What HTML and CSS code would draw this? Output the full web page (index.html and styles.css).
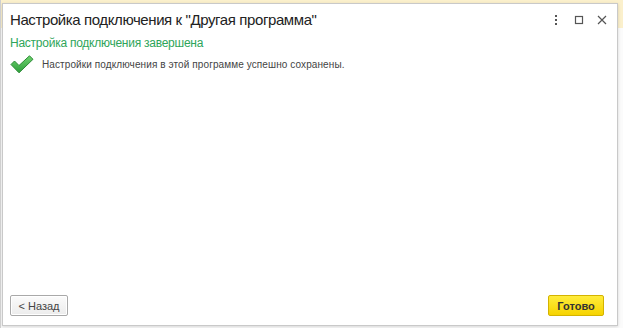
FILE: index.html
```html
<!DOCTYPE html>
<html lang="ru">
<head>
    <meta charset="UTF-8">
    <title>Настройка подключения</title>
    <link rel="stylesheet" href="styles.css">
</head>
<body>
    <div class="desktop">
        <div class="topband"></div>
        <div class="window">
            <div class="titlebar">
                <h1 class="title">Настройка подключения к "Другая программа"</h1>
                <div class="controls">
                    <svg width="12" height="12" viewBox="0 0 12 12">
                        <rect x="5" y="1" width="2" height="2" fill="#555"/>
                        <rect x="5" y="5" width="2" height="2" fill="#555"/>
                        <rect x="5" y="9" width="2" height="2" fill="#555"/>
                    </svg>
                    <svg width="12" height="12" viewBox="0 0 12 12">
                        <rect x="2.5" y="2.5" width="7" height="7" fill="none" stroke="#555" stroke-width="1.2"/>
                    </svg>
                    <svg width="12" height="12" viewBox="0 0 12 12">
                        <path d="M2 2 L10 10 M10 2 L2 10" stroke="#555" stroke-width="1.2"/>
                    </svg>
                </div>
            </div>
            <div class="content">
                <div class="subtitle">Настройка подключения завершена</div>
                <div class="message">
                    <svg class="check" width="24" height="19" viewBox="0 0 24 19">
                        <defs>
                            <linearGradient id="g" x1="0" y1="0" x2="0" y2="1">
                                <stop offset="0" stop-color="#6ed36e"/>
                                <stop offset="1" stop-color="#2e9e3c"/>
                            </linearGradient>
                        </defs>
                        <path d="M1 9.5 L4.5 6 L9 10.5 L19.5 0.8 L23 4.3 L9 17.8 Z" fill="url(#g)" stroke="#2c8a36" stroke-width="1" stroke-linejoin="round"/>
                    </svg>
                    <span>Настройки подключения в этой программе успешно сохранены.</span>
                </div>
            </div>
            <div class="footer">
                <button class="btn back">&lt; Назад</button>
                <button class="btn done">Готово</button>
            </div>
        </div>
    </div>
</body>
</html>
```
FILE: styles.css
```css
* {
    box-sizing: border-box;
}
body {
    margin: 0;
    font-family: "Liberation Sans", Arial, sans-serif;
    background: #f7f7f7;
}
.desktop {
    position: relative;
    width: 623px;
    height: 328px;
    overflow: hidden;
    background: #fbfbfb;
    border-left: 1px solid #cfcfcf;
}
.topband {
    height: 28px;
    background: #fbf0cc;
}
.window {
    position: absolute;
    left: 1px;
    top: 3px;
    width: 616px;
    height: 323px;
    background: #fff;
    border: 1px solid #c9c9c9;
    box-shadow: 0 1px 3px rgba(0, 0, 0, .15);
    display: flex;
    flex-direction: column;
}
.titlebar {
    display: flex;
    align-items: center;
    justify-content: space-between;
    padding: 4px 9px 0 7px;
    height: 27px;
}
.title {
    margin: 0;
    font-size: 15px;
    letter-spacing: -0.4px;
    font-weight: normal;
    color: #222;
}
.controls {
    display: flex;
    gap: 11px;
    margin-top: 0;
}
.content {
    flex-grow: 1;
    padding: 5px 7px;
}
.subtitle {
    color: #2ea55a;
    font-size: 12px;
    letter-spacing: -0.25px;
}
.message {
    display: flex;
    align-items: center;
    gap: 8px;
    margin-top: 5px;
    font-size: 10px;
    letter-spacing: 0.1px;
    color: #444;
}
.footer {
    display: flex;
    justify-content: space-between;
    padding: 0 13px 9px 7px;
}
.btn {
    height: 21px;
    font-family: inherit;
    font-size: 11px;
    cursor: pointer;
}
.back {
    width: 58px;
    border: 1px solid #a9a9a9;
    box-shadow: inset 0 0 0 1px #fff;
    background: linear-gradient(#fbfbfb, #ececec);
    color: #444;
    border-radius: 2px;
}
.done {
    width: 56px;
    border: 1px solid #d4b300;
    border-radius: 2px;
    background: linear-gradient(#ffec3c, #f6d300);
    color: #333;
    font-weight: bold;
}
```
